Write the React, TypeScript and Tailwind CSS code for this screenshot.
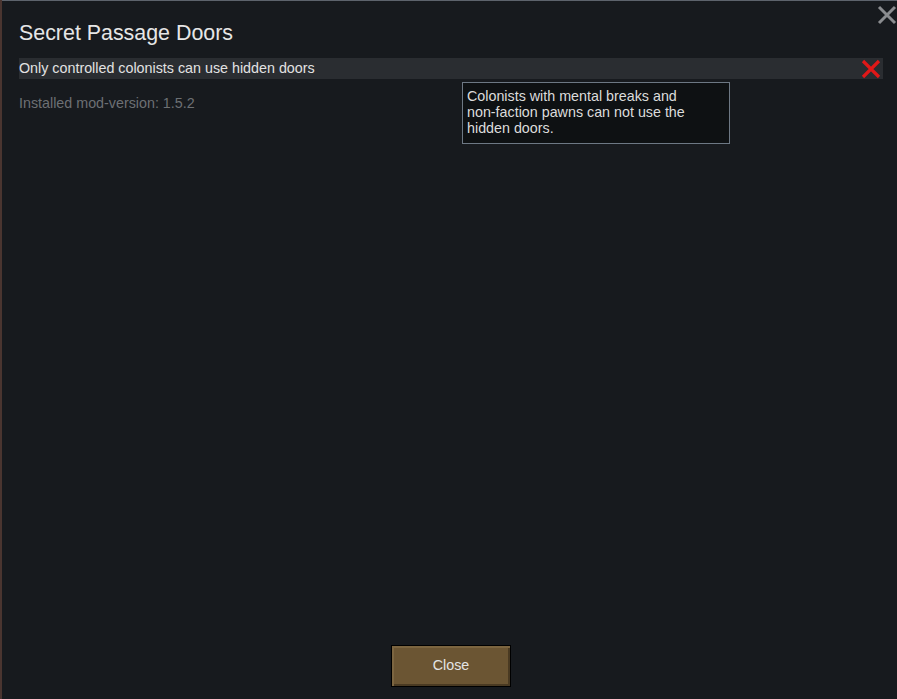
import React from 'react';

const font = { fontFamily: '"Liberation Sans", Arial, sans-serif' };

const App: React.FC = () => {
  return (
    <div className="w-[897px] h-[699px] flex bg-[#171a1e] overflow-hidden" style={font}>
      <div className="w-[2px] h-full bg-[#4a3530]" />
      <div className="relative flex-1 flex flex-col border-t border-[#5d636c] bg-[#171a1e]">
        <button className="absolute right-0 top-[3px] w-[21px] h-[21px] flex items-center justify-center">
          <svg width="20" height="20" viewBox="0 0 20 20">
            <path d="M2 2 L18 18 M18 2 L2 18" stroke="#8a8c8f" strokeWidth="3" />
          </svg>
        </button>

        <div className="pl-[17px] pr-[14px] pt-[20px]">
          <h1 className="text-[21.4px] leading-[24px] text-[#e6e6e6]">Secret Passage Doors</h1>

          <div className="mt-[13px] h-[21px] bg-[#2a2d31] flex items-center justify-between">
            <span className="text-[14.3px] text-[#e2e2e2] leading-[21px]">Only controlled colonists can use hidden doors</span>
            <svg width="22" height="20" viewBox="0 0 22 20" className="mr-[1px]">
              <path d="M3 2 L19 18 M19 2 L3 18" stroke="#e01818" strokeWidth="3.2" />
            </svg>
          </div>

          <div className="relative">
            <p className="mt-[16px] text-[14.3px] leading-[16px] text-[#6d7074]">Installed mod-version: 1.5.2</p>
            <div className="absolute left-[443px] top-[-13px] w-[268px] h-[62px] bg-[#0e1113] border border-[#6d7884] pl-[4px] pt-[5px] text-[14.3px] leading-[16px] text-[#dcdcdc]">
              <div className="w-[228px]">
                Colonists with mental breaks and non-faction pawns can not use the hidden doors.
              </div>
            </div>
          </div>
        </div>

        <div className="flex-1" />

        <div className="flex justify-center pb-[12px] pl-[3px]">
          <button className="w-[120px] h-[42px] border border-black bg-[#6b5533] shadow-[inset_2px_2px_0_#7c6540,inset_-2px_-2px_0_#4a3a22] text-[14.3px] text-[#e4e4e4]">
            Close
          </button>
        </div>
      </div>
    </div>
  );
};

export default App;
